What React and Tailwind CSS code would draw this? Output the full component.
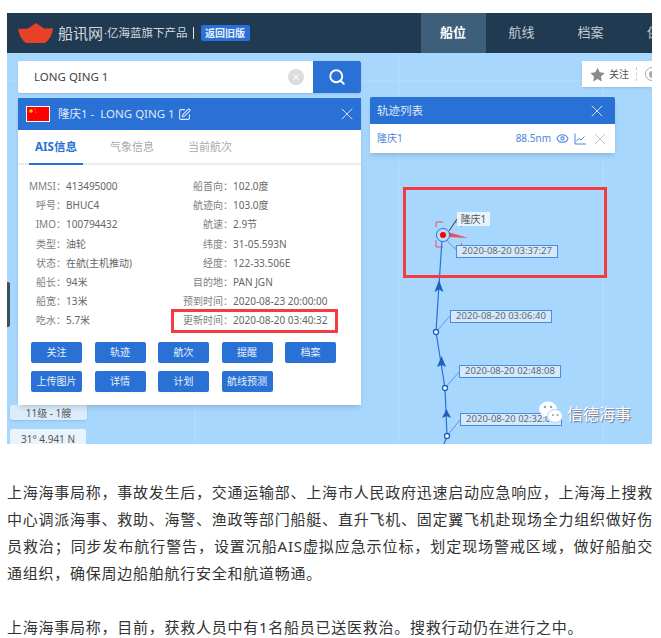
import React from "react";
import { Search, X, Eye, SquarePen } from "lucide-react";

const cjk = { fontFamily: '"Noto Sans", "Noto Sans CJK SC", sans-serif' };

const leftRows = [
  ["MMSI：", "413495000"],
  ["呼号：", "BHUC4"],
  ["IMO：", "100794432"],
  ["类型：", "油轮"],
  ["状态：", "在航(主机推动)"],
  ["船长：", "94米"],
  ["船宽：", "13米"],
  ["吃水：", "5.7米"],
];
const rightRows = [
  ["船首向：", "102.0度"],
  ["航迹向：", "103.0度"],
  ["航速：", "2.9节"],
  ["纬度：", "31-05.593N"],
  ["经度：", "122-33.506E"],
  ["目的地：", "PAN JGN"],
  ["预到时间：", "2020-08-23 20:00:00"],
  ["更新时间：", "2020-08-20 03:40:32"],
];
const buttons = ["关注", "轨迹", "航次", "提醒", "档案", "上传图片", "详情", "计划", "航线预测"];
const stamps = [
  ["2020-08-20 03:37:27", 449, 192, 102],
  ["2020-08-20 03:06:40", 443, 257, 102],
  ["2020-08-20 02:48:08", 452, 312, 102],
  ["2020-08-20 02:32:08", 453, 360, 102],
];

function Row({ label, value, w }) {
  return (
    <div className="flex h-[19.2px] items-center text-[10px] text-[#666]">
      <span className={`${w} shrink-0 text-right text-[#808080]`}>{label}</span>
      <span className="whitespace-nowrap">{value}</span>
    </div>
  );
}

function Track() {
  return (
    <svg className="absolute left-0 top-0" width="645" height="391" viewBox="7 53 645 391" fill="none">
      <line x1="195" y1="53" x2="195" y2="444" stroke="#b4dcfd" />
      <line x1="399" y1="53" x2="399" y2="444" stroke="#b4dcfd" />
      <line x1="603" y1="53" x2="603" y2="444" stroke="#b4dcfd" />
      <line x1="7" y1="81" x2="652" y2="81" stroke="#b4dcfd" />
      <polyline points="442,240 438,300 436,332 445,388 447,436 444,444" stroke="#2a71d5" strokeWidth="1.2" />
      <path d="M439 280 L443.5 292 L439 289.5 L434.5 292 Z" fill="#1c60c0" />
      <path d="M441.5 356 L446 367 L441.5 365 L437 367 Z" fill="#1c60c0" />
      <path d="M446.5 409 L451 418 L446.5 416 L442 418 Z" fill="#1c60c0" />
      <path d="M436 332 L450 316 M445 388 L459 372 M447 436 L460 420 M443 236 L456 250" stroke="#5b97de" />
      <circle cx="436" cy="332" r="2.5" fill="#fff" stroke="#1c60c0" strokeWidth="1.3" />
      <circle cx="445" cy="388" r="2.5" fill="#fff" stroke="#1c60c0" strokeWidth="1.3" />
      <circle cx="447" cy="436" r="2.5" fill="#fff" stroke="#1c60c0" strokeWidth="1.3" />
      <path d="M436 227 V222 H443 M455 222 H461.500 V227 M436 240 V247 H443 M455 247 H461.500 V243" stroke="#e0575f" strokeWidth="1" />
      <path d="M448 232 L468 238 L448 237 Z" fill="#e8505a" />
      <line x1="449" y1="231" x2="457" y2="219" stroke="#333" strokeWidth="1" />
      <circle cx="443" cy="235" r="6.5" stroke="#2a71d5" fill="#bcdcf8" strokeWidth="1" />
      <circle cx="443" cy="235" r="3" fill="#f00" />
    </svg>
  );
}

export default function App() {
  return (
    <div className="min-h-[638px] w-[661px] overflow-hidden bg-white pl-[7px] pt-[13px]" style={cjk}>
      <div className="flex h-[431px] w-[645px] flex-col overflow-hidden bg-[#a8d7fe]">
        <header className="flex h-[40px] shrink-0 items-center overflow-hidden bg-[#1f3a51] pl-[11px]">
          <svg width="35" height="20" viewBox="0 0 35 20" className="shrink-0">
            <path d="M0 6 Q5 5.500 10 5.500 L18 0 L26 5.500 Q31 5.500 35 5 Q34 15 27 20 L8 20 Q2 16 0 6 Z" fill="#e8412a" />
          </svg>
          <span className="ml-[5px] shrink-0 text-[15px] text-[#d5d9dd]">船讯网</span>
          <span className="ml-[1px] shrink-0 text-[11.500px] whitespace-nowrap text-[#d5d9dd]">·亿海蓝旗下产品</span>
          <span className="ml-[5px] h-[12px] w-[1px] shrink-0 bg-[#e8e8e8]" />
          <span className="ml-[7px] flex h-[16px] w-[49px] shrink-0 items-center justify-center rounded-[2px] bg-[#2a71d5] text-[10px] font-bold text-[#e8f0fa]">返回旧版</span>
          <nav className="ml-[171px] flex h-full shrink-0 text-[13px] text-[#c4ccd3]">
            <span className="flex w-[65px] shrink-0 items-center justify-center bg-[#3e5f7a] font-bold text-white">船位</span>
            <span className="flex w-[72px] shrink-0 items-center justify-center">航线</span>
            <span className="flex w-[66px] shrink-0 items-center justify-center">档案</span>
            <span className="flex w-[60px] shrink-0 items-center justify-center">保</span>
          </nav>
        </header>

        <div className="relative flex flex-1 items-start pl-[11px] pt-[8px]">
          <Track />
          {stamps.map(([t, x, y, w]) => (
            <div
              key={t}
              className="absolute flex h-[13px] items-center justify-center border border-[#4a8be0] bg-[#d4e9fb] text-[9.500px] whitespace-nowrap text-[#5f6a75]"
              style={{ left: x, top: y, width: w }}
            >
              {t}
            </div>
          ))}
          <div className="absolute left-[450px] top-[159px] flex h-[14px] w-[33px] items-center justify-center bg-[#e8f3fd] text-[10px] text-[#555]">隆庆1</div>
          <div className="absolute left-[396px] top-[134px] h-[91px] w-[204px] border-[3px] border-[#f53b3f]" />

          <div className="absolute bottom-[117px] left-0 h-[45px] w-[3px] rounded-r-[2px] bg-[#3a5060]" />
          <div className="absolute bottom-[24px] left-[3px] flex h-[15px] w-[77px] items-center justify-center rounded-[2px] bg-[#dcecfb] pt-[1px] text-[10px] text-[#555] shadow-sm">11级 - 1艘</div>
          <div className="absolute bottom-[-5px] left-[3px] flex h-[20px] w-[76px] items-center justify-center rounded-t-[2px] bg-[#e8f3fd] text-[10px] text-[#555]">31° 4.941 N</div>

          <div className="absolute bottom-[18px] left-[532px] flex items-center gap-[4px]">
            <svg width="24" height="22" viewBox="0 0 24 22" fill="#fff">
              <ellipse cx="9" cy="8" rx="9" ry="7.500" />
              <path d="M4 13 L3 17 L8 14 Z" />
              <ellipse cx="16" cy="15" rx="7.500" ry="6.500" stroke="#a8d7fe" />
              <circle cx="6" cy="6" r="1.200" fill="#8aa" />
              <circle cx="12" cy="6" r="1.200" fill="#8aa" />
              <circle cx="14" cy="14" r="1" fill="#8aa" />
              <circle cx="18.500" cy="14" r="1" fill="#8aa" />
            </svg>
            <span className="mt-[5px] text-[16px] whitespace-nowrap text-white [text-shadow:1px_1px_1px_#778]">信德海事</span>
          </div>

          <div className="relative flex w-[343px] shrink-0 flex-col gap-[5px]">
            <div className="flex h-[32px] rounded-[2px] bg-white shadow-sm">
              <span className="flex flex-1 items-center pl-[16px] text-[11.500px] text-[#444]">LONG QING 1</span>
              <span className="mr-[9px] flex h-[16px] w-[16px] items-center justify-center self-center rounded-full bg-[#dcdcdc]">
                <X size={10} color="#fff" strokeWidth={2.5} />
              </span>
              <span className="flex w-[48px] items-center justify-center rounded-r-[2px] bg-[#2a71d5]">
                <Search size={18} color="#fff" strokeWidth={2.5} />
              </span>
            </div>

            <div className="relative flex h-[307px] flex-col bg-white shadow-md">
              <div className="flex h-[32px] shrink-0 items-center bg-[#2a71d5] pl-[8px] pr-[4px] text-[11.500px] text-[#dfe9f8]">
                <svg width="24" height="16" viewBox="0 0 24 16" className="shrink-0">
                  <rect x="0.500" y="0.500" width="23" height="15" fill="#f00" stroke="#fff" />
                  <circle cx="5" cy="5" r="1.800" fill="#fc0" />
                  <circle cx="9" cy="3" r="0.600" fill="#fc0" />
                  <circle cx="10" cy="6" r="0.600" fill="#fc0" />
                </svg>
                <span className="ml-[8px] whitespace-pre">隆庆1 -  LONG QING 1</span>
                <SquarePen size={13} className="ml-[3px]" />
                <X size={20} strokeWidth={1.100} className="ml-auto" />
              </div>

              <div className="flex h-[35px] shrink-0 border-b-2 border-[#ececec] pt-[1px] text-[11px] text-[#a9a9a9]">
                <span className="-mb-[2px] ml-[11px] flex w-[54px] items-center justify-center border-b-2 border-[#2a71d5] text-[11.500px] font-bold text-[#2a71d5]">AIS信息</span>
                <span className="ml-[27px] flex items-center">气象信息</span>
                <span className="ml-[34px] flex items-center">当前航次</span>
              </div>

              <div className="mt-[12px] flex">
                <div className="flex w-[155px] shrink-0 flex-col">
                  {leftRows.map(([l, v]) => <Row key={l} label={l} value={v} w="w-[48px]" />)}
                </div>
                <div className="flex flex-col">
                  {rightRows.map(([l, v]) => <Row key={l} label={l} value={v} w="w-[60px]" />)}
                </div>
              </div>

              <div className="absolute left-[153px] top-[211px] h-[24px] w-[167px] border-[3px] border-[#f53b3f]" />

              <div className="ml-[13px] mt-[11px] grid w-[306px] grid-cols-[repeat(5,51px)] gap-x-[12.500px] gap-y-[8px]">
                {buttons.map((b) => (
                  <span key={b} className="flex h-[21px] items-center justify-center rounded-[2px] bg-[#2a71d5] text-[10px] whitespace-nowrap text-[#e8f0fa]">{b}</span>
                ))}
              </div>
            </div>
          </div>

          <div className="relative ml-[9px] mt-[36px] w-[245px] shrink-0 shadow-md">
            <div className="flex h-[27px] items-center justify-between rounded-t-[2px] bg-[#2a71d5] pl-[7px] pr-[8px] text-[11.500px] text-[#dfe9f8]">
              轨迹列表
              <X size={20} strokeWidth={1.100} />
            </div>
            <div className="flex h-[29px] items-center bg-white pl-[7px] pr-[6px] text-[10px] text-[#4a86d8]">
              隆庆1
              <span className="ml-auto">88.5nm</span>
              <Eye size={13} className="ml-[5px]" />
              <svg width="12" height="12" viewBox="0 0 12 12" fill="none" stroke="currentColor" className="ml-[5px]">
                <path d="M1 0.500 V11 H12" />
                <path d="M2.500 8 L5 5.500 L7 7 L10.500 3.500" />
              </svg>
              <X size={18} strokeWidth={1.100} color="#b5b5b5" className="ml-[5px]" />
            </div>
          </div>

          <div className="absolute right-0 top-[8px] flex h-[26px] w-[70px] items-center overflow-hidden bg-white pl-[8px] text-[10px] text-[#555] shadow-sm">
            <svg width="15" height="15" viewBox="0 0 24 24" fill="#8a8a8a" className="shrink-0">
              <path d="M12 1 L15.500 8.500 L23.500 9.500 L17.500 15 L19 23 L12 19 L5 23 L6.500 15 L0.500 9.500 L8.500 8.500 Z" />
            </svg>
            <span className="ml-[4px] whitespace-nowrap">关注</span>
            <span className="ml-[7px] h-[14px] shrink-0 border-l border-dashed border-[#ccc]" />
            <span className="ml-[8px] flex h-[14px] w-[14px] shrink-0 items-center justify-center rounded-full border border-[#aaa]">
              <span className="h-[7px] w-[7px] rounded-full bg-[#aaa]" />
            </span>
          </div>
        </div>
      </div>

      <div className="mt-[35px] w-[646px] text-justify text-[15px] leading-[27px] tracking-[0.75px] text-[#333]">
        <p>上海海事局称，事故发生后，交通运输部、上海市人民政府迅速启动应急响应，上海海上搜救中心调派海事、救助、海警、渔政等部门船艇、直升飞机、固定翼飞机赴现场全力组织做好伤员救治；同步发布航行警告，设置沉船AIS虚拟应急示位标，划定现场警戒区域，做好船舶交通组织，确保周边船舶航行安全和航道畅通。</p>
        <p className="mt-[27px]">上海海事局称，目前，获救人员中有1名船员已送医救治。搜救行动仍在进行之中。</p>
      </div>
    </div>
  );
}
